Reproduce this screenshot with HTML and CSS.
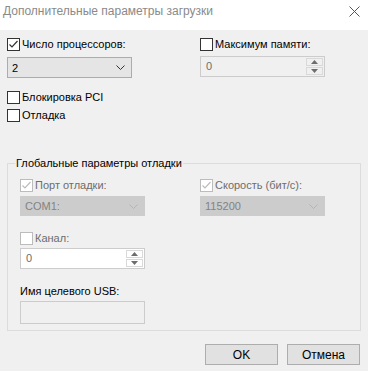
FILE: index.html
```html
<!DOCTYPE html>
<html lang="ru">
<head>
  <meta charset="UTF-8">
  <title>Дополнительные параметры загрузки</title>
  <link rel="stylesheet" href="styles.css">
</head>
<body>
  <div class="titlebar">
    <span class="title">Дополнительные параметры загрузки</span>
    <svg class="close" width="11" height="11" viewBox="0 0 11 11"><path d="M0.5 0.5 L10.5 10.5 M10.5 0.5 L0.5 10.5" stroke="#555" stroke-width="1"/></svg>
  </div>

  <div class="content">
    <!-- top options -->
    <div class="top">
      <div class="col">
        <div class="check">
          <span class="box"><svg width="11" height="11" viewBox="0 0 11 11"><path d="M1.5 5.5 L4 8 L9.5 2" fill="none" stroke="#333" stroke-width="1.2"/></svg></span>
          <span>Число процессоров:</span>
        </div>
        <div class="select"><span>2</span>
          <svg class="chev" width="9" height="5" viewBox="0 0 9 5"><path d="M0.5 0.5 L4.5 4.5 L8.5 0.5" fill="none" stroke="#333"/></svg>
        </div>
        <div class="check pci">
          <span class="box"></span>
          <span>Блокировка PCI</span>
        </div>
        <div class="check">
          <span class="box"></span>
          <span>Отладка</span>
        </div>
      </div>
      <div class="col">
        <div class="check">
          <span class="box"></span>
          <span>Максимум памяти:</span>
        </div>
        <div class="spin off">
          <span class="val">0</span>
          <div class="arrows">
            <span class="arrow"><svg width="7" height="4" viewBox="0 0 7 4"><path d="M0 4 L3.5 0 L7 4 Z" fill="#6d6d6d"/></svg></span>
            <span class="arrow"><svg width="7" height="4" viewBox="0 0 7 4"><path d="M0 0 L3.5 4 L7 0 Z" fill="#6d6d6d"/></svg></span>
          </div>
        </div>
      </div>
    </div>

    <fieldset class="group">
      <legend>Глобальные параметры отладки</legend>
      <div class="group-grid">
        <div class="col">
          <div class="check dis">
            <span class="box"><svg width="11" height="11" viewBox="0 0 11 11"><path d="M1.5 5.5 L4 8 L9.5 2" fill="none" stroke="#bcbcbc" stroke-width="1.2"/></svg></span>
            <span>Порт отладки:</span>
          </div>
          <div class="select dis"><span>COM1:</span>
            <svg class="chev" width="9" height="5" viewBox="0 0 9 5"><path d="M0.5 0.5 L4.5 4.5 L8.5 0.5" fill="none" stroke="#b5b5b5"/></svg>
          </div>
          <div class="check dis chan">
            <span class="box"></span>
            <span>Канал:</span>
          </div>
          <div class="spin white">
            <span class="val">0</span>
            <div class="arrows">
              <span class="arrow"><svg width="7" height="4" viewBox="0 0 7 4"><path d="M0 4 L3.5 0 L7 4 Z" fill="#6d6d6d"/></svg></span>
              <span class="arrow"><svg width="7" height="4" viewBox="0 0 7 4"><path d="M0 0 L3.5 4 L7 0 Z" fill="#6d6d6d"/></svg></span>
            </div>
          </div>
          <div class="label usb">Имя целевого USB:</div>
          <div class="textbox"></div>
        </div>
        <div class="col">
          <div class="check dis">
            <span class="box"><svg width="11" height="11" viewBox="0 0 11 11"><path d="M1.5 5.5 L4 8 L9.5 2" fill="none" stroke="#bcbcbc" stroke-width="1.2"/></svg></span>
            <span>Скорость (бит/с):</span>
          </div>
          <div class="select dis"><span>115200</span>
            <svg class="chev" width="9" height="5" viewBox="0 0 9 5"><path d="M0.5 0.5 L4.5 4.5 L8.5 0.5" fill="none" stroke="#b5b5b5"/></svg>
          </div>
        </div>
      </div>
    </fieldset>

    <div class="buttons">
      <button type="button">OK</button>
      <button type="button">Отмена</button>
    </div>
  </div>
</body>
</html>
```

FILE: styles.css
```css
body {
  margin: 0;
  width: 368px;
  height: 371px;
  overflow: hidden;
  background: #f0f0f0;
  font-family: "Liberation Sans", Arial, sans-serif;
  font-size: 11px;
  color: #000;
}
.titlebar {
  height: 30px;
  background: #fff;
  display: flex;
  justify-content: space-between;
  align-items: flex-start;
  padding: 3px 8px 0 3px;
  box-sizing: border-box;
}
.title {
  font-size: 12px;
  color: #8a8a8a;
  line-height: 16px;
}
.close {
  margin-top: 3px;
}
.content {
  padding: 0 7px;
}
.top {
  display: grid;
  grid-template-columns: 193px 125px;
  padding-top: 6px;
  height: 120px;
}
.col {
  display: flex;
  flex-direction: column;
  align-items: flex-start;
}
.check {
  display: flex;
  align-items: center;
  gap: 2px;
  height: 16px;
}
.box {
  width: 13px;
  height: 13px;
  box-sizing: border-box;
  border: 1px solid #333;
  background: #fff;
  display: flex;
  align-items: center;
  justify-content: center;
}
.check.pci { margin-top: 11px; }
.check.pci + .check { margin-top: 2px; }
.check.dis { color: #6d6d6d; }
.check.dis .box { border-color: #bcbcbc; }
.check.chan { margin-top: 14px; }
.select {
  margin-top: 5px;
  width: 125px;
  height: 21px;
  box-sizing: border-box;
  border: 1px solid #acacac;
  background: #e5e5e5;
  display: flex;
  align-items: center;
  justify-content: space-between;
  padding: 0 6px 0 4px;
}
.select.dis {
  margin-top: 3px;
  height: 20px;
  background: #cccccc;
  border-color: #cccccc;
  color: #838383;
}
.spin {
  margin-top: 4px;
  width: 125px;
  height: 21px;
  box-sizing: border-box;
  border: 1px solid #cccccc;
  display: flex;
  justify-content: space-between;
  padding: 1px 1px 1px 5px;
}
.spin.off { background: #f0f0f0; }
.spin.white { background: #fff; margin-top: 2px; }
.val {
  color: #6d6d6d;
  line-height: 17px;
}
.arrows {
  display: flex;
  flex-direction: column;
  gap: 1px;
  width: 17px;
}
.arrow {
  flex: 1;
  border: 1px solid #d9d9d9;
  background: #f0f0f0;
  display: flex;
  align-items: center;
  justify-content: center;
}
.spin.white .arrow { background: #fff; }
.group {
  margin: 0;
  padding: 7px 0 7px 12px;
  border: 1px solid #dcdcdc;
  height: 175px;
  box-sizing: border-box;
}
.group legend {
  padding: 0 1px;
  margin-left: -5px;
  line-height: 14px;
}
.group-grid {
  display: grid;
  grid-template-columns: 180px 125px;
}
.label.usb {
  margin-top: 14px;
  height: 16px;
  line-height: 16px;
}
.textbox {
  margin-top: 2px;
  width: 125px;
  height: 23px;
  box-sizing: border-box;
  border: 1px solid #cccccc;
  background: #f0f0f0;
}
.buttons {
  display: flex;
  justify-content: flex-end;
  gap: 9px;
  margin-top: 13px;
  padding-right: 1px;
}
.buttons button {
  width: 73px;
  height: 21px;
  border: 1px solid #adadad;
  background: #e1e1e1;
  font-family: inherit;
  font-size: 12px;
  padding: 0;
  color: #000;
}
```
